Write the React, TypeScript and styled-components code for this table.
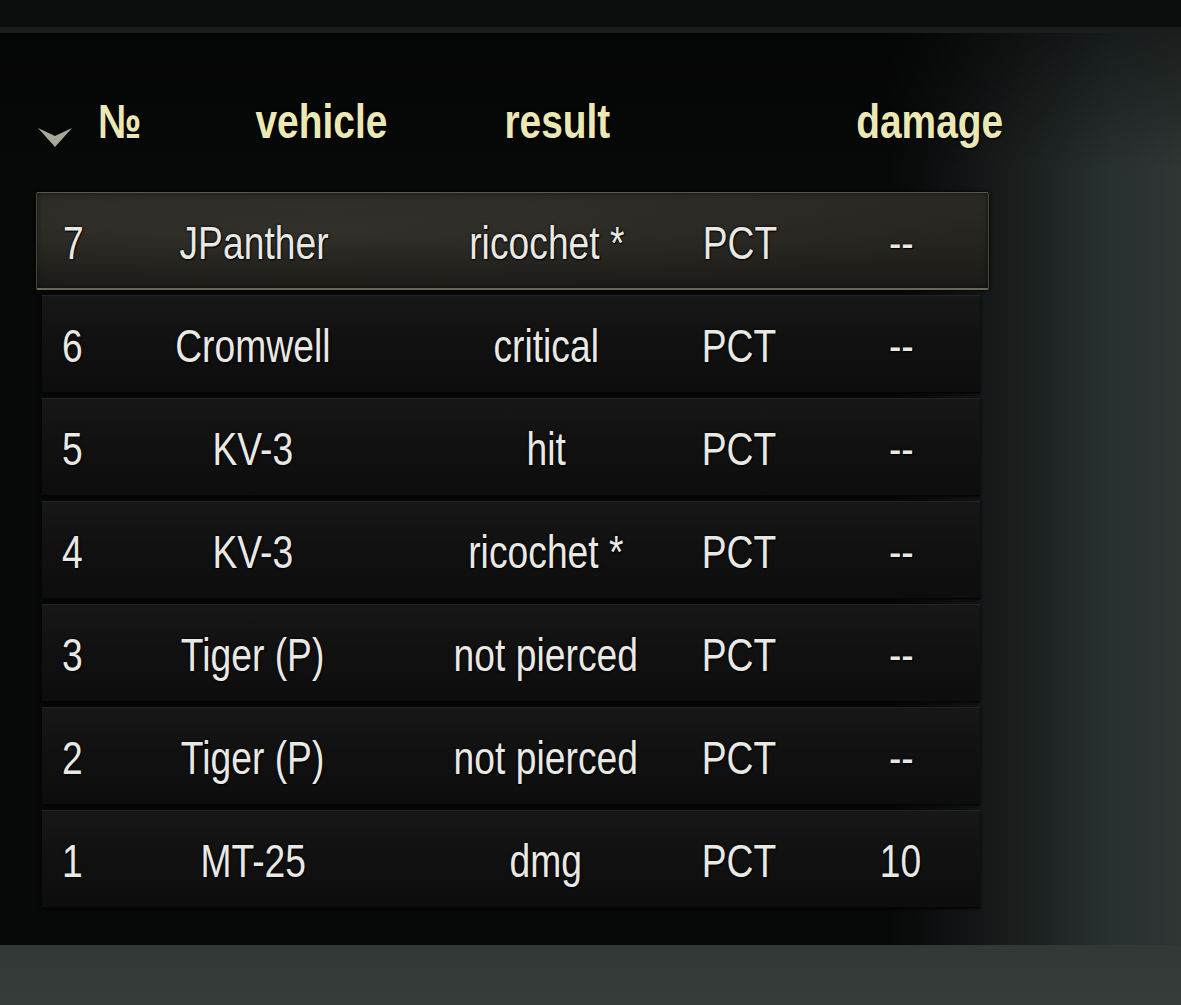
import React from "react";
import styled, { createGlobalStyle, css } from "styled-components";

const GlobalStyle = createGlobalStyle`
  html, body {
    margin: 0;
    padding: 0;
    background: #333a38;
  }
  body {
    font-family: "Liberation Sans", Arial, sans-serif;
  }
`;

const Page = styled.div`
  width: 1181px;
  height: 1005px;
  display: flex;
  flex-direction: column;
  overflow: hidden;
  background: #333a38;
`;

const TopBar = styled.div`
  height: 27px;
  flex: none;
  background: #0b0c0c;
  border-bottom: 6px solid #1a1c1d;
`;

const Panel = styled.section`
  height: 912px;
  flex: none;
  box-sizing: border-box;
  padding: 59px 0 0 38px;
  background:
    linear-gradient(180deg, rgba(0, 0, 0, 0.45) 0px, rgba(0, 0, 0, 0) 140px),
    linear-gradient(
      90deg,
      #070808 0px,
      #070808 890px,
      #0f1212 950px,
      #1c2120 1030px,
      #283030 1110px,
      #2f3634 1181px
    );
`;

const HeaderRow = styled.div`
  display: grid;
  grid-template-columns: 60px 80px 286px 186px 205px 150px;
  height: 60px;
  align-items: center;
`;

/* condensed look: the game font is a narrow grotesque */
const Narrow = styled.span<{ $origin?: "left" | "center" }>`
  display: inline-block;
  flex: none;
  transform: scaleX(0.81);
  transform-origin: ${(p) => (p.$origin === "left" ? "left" : "center")} center;
`;

const HeaderCell = styled.div<{ $align?: "left" | "center"; $col?: number }>`
  display: flex;
  justify-content: ${(p) => (p.$align === "left" ? "flex-start" : "center")};
  font-family: "Liberation Sans", Arial, sans-serif;
  font-weight: 700;
  font-size: 48px;
  line-height: 60px;
  color: #ece8b4;
  white-space: nowrap;
  text-shadow: 0 0 3px #000, 1px 1px 1px #000;
  ${(p) =>
    p.$col &&
    css`
      grid-column: ${p.$col};
    `}
`;

const SortArrow = styled.svg`
  width: 34px;
  height: 19px;
  align-self: end;
  margin-bottom: 5px;
`;

const Rows = styled.div`
  display: flex;
  flex-direction: column;
  gap: 5px;
  margin-top: 40px;
  margin-left: 4px;
  width: 938px;
`;

const Row = styled.div<{ $active?: boolean }>`
  display: grid;
  grid-template-columns: 78px 266px 320px 66px 1fr;
  align-items: center;
  height: 98px;
  box-sizing: border-box;
  padding-top: 4px;
  background: linear-gradient(180deg, #171717 0%, #111111 45%, #0d0d0d 100%);
  border-top: 1px solid #222322;
  border-bottom: 1px solid #050505;
  box-shadow: 0 1px 3px rgba(0, 0, 0, 0.8);
  ${(p) =>
    p.$active &&
    css`
      margin: 0 -9px 0 -6px;
      padding: 4px 9px 0 6px;
      background:
        radial-gradient(ellipse at 30% 40%, rgba(255, 250, 225, 0.05), rgba(0, 0, 0, 0) 70%),
        linear-gradient(180deg, #2b2a26 0%, #25241f 50%, #1c1b18 100%);
      border: 1px solid #48453b;
      border-top-color: #5c5849;
      border-bottom: 2px solid #6d6752;
      border-radius: 2px;
      box-shadow: 0 0 4px #000, inset 0 0 6px rgba(0, 0, 0, 0.5);
    `}
`;

const Cell = styled.div<{ $align?: "left" | "center"; $padLeft?: number }>`
  display: flex;
  justify-content: ${(p) => (p.$align === "left" ? "flex-start" : "center")};
  min-width: 0;
  font-family: "Liberation Sans", Arial, sans-serif;
  font-size: 46px;
  line-height: 60px;
  color: #e8e8e4;
  white-space: nowrap;
  padding-left: ${(p) => p.$padLeft ?? 0}px;
  text-shadow: 0 0 3px #000, 1px 1px 1px #000;
`;

const Bottom = styled.div`
  flex: 1;
  background: linear-gradient(180deg, #323836 0%, #353c3a 100%);
`;

type Shot = { n: number; vehicle: string; result: string; kind: string; damage: string };

const shots: Shot[] = [
  { n: 7, vehicle: "JPanther", result: "ricochet *", kind: "PCT", damage: "--" },
  { n: 6, vehicle: "Cromwell", result: "critical", kind: "PCT", damage: "--" },
  { n: 5, vehicle: "KV-3", result: "hit", kind: "PCT", damage: "--" },
  { n: 4, vehicle: "KV-3", result: "ricochet *", kind: "PCT", damage: "--" },
  { n: 3, vehicle: "Tiger (P)", result: "not pierced", kind: "PCT", damage: "--" },
  { n: 2, vehicle: "Tiger (P)", result: "not pierced", kind: "PCT", damage: "--" },
  { n: 1, vehicle: "MT-25", result: "dmg", kind: "PCT", damage: "10" },
];

export default function App() {
  return (
    <>
      <GlobalStyle />
      <Page>
        <TopBar />
        <Panel>
          <HeaderRow>
            <SortArrow viewBox="0 0 34 19">
              <polygon points="0,0 17,8 34,0 17,19" fill="#a9a89a" />
            </SortArrow>
            <HeaderCell $align="left">
              <Narrow $origin="left">№</Narrow>
            </HeaderCell>
            <HeaderCell>
              <Narrow>vehicle</Narrow>
            </HeaderCell>
            <HeaderCell>
              <Narrow>result</Narrow>
            </HeaderCell>
            <HeaderCell $col={6}>
              <Narrow>damage</Narrow>
            </HeaderCell>
          </HeaderRow>
          <Rows>
            {shots.map((s, i) => (
              <Row key={s.n} $active={i === 0}>
                <Cell $align="left" $padLeft={20}>
                  <Narrow $origin="left">{s.n}</Narrow>
                </Cell>
                <Cell>
                  <Narrow>{s.vehicle}</Narrow>
                </Cell>
                <Cell>
                  <Narrow>{s.result}</Narrow>
                </Cell>
                <Cell>
                  <Narrow>{s.kind}</Narrow>
                </Cell>
                <Cell $padLeft={50}>
                  <Narrow>{s.damage}</Narrow>
                </Cell>
              </Row>
            ))}
          </Rows>
        </Panel>
        <Bottom />
      </Page>
    </>
  );
}
